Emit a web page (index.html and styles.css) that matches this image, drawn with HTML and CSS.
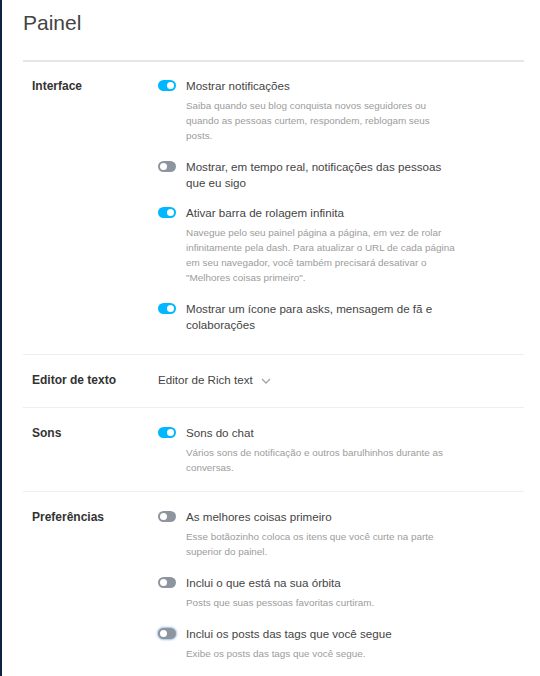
FILE: index.html
```html
<!DOCTYPE html>
<html lang="pt">
<head>
<meta charset="utf-8">
<link rel="stylesheet" href="styles.css">
</head>
<body>
<div class="page">
  <h1 class="title">Painel</h1>
  <div class="sections">
    <section class="section first">
      <div class="label">Interface</div>
      <div class="options">
        <div class="option">
          <span class="toggle on"></span>
          <div class="text">
            <div class="opt-title">Mostrar notificações</div>
            <div class="opt-desc">Saiba quando seu blog conquista novos seguidores ou quando as pessoas curtem, respondem, reblogam seus posts.</div>
          </div>
        </div>
        <div class="option">
          <span class="toggle"></span>
          <div class="text">
            <div class="opt-title">Mostrar, em tempo real, notificações das pessoas que eu sigo</div>
          </div>
        </div>
        <div class="option">
          <span class="toggle on"></span>
          <div class="text">
            <div class="opt-title">Ativar barra de rolagem infinita</div>
            <div class="opt-desc">Navegue pelo seu painel página a página, em vez de rolar infinitamente pela dash. Para atualizar o URL de cada página em seu navegador, você também precisará desativar o "Melhores coisas primeiro".</div>
          </div>
        </div>
        <div class="option">
          <span class="toggle on"></span>
          <div class="text">
            <div class="opt-title">Mostrar um ícone para asks, mensagem de fã e colaborações</div>
          </div>
        </div>
      </div>
    </section>
    <section class="section editor">
      <div class="label">Editor de texto</div>
      <div class="options">
        <div class="select">Editor de Rich text
          <svg class="chev" width="10" height="6" viewBox="0 0 10 6"><path d="M1 1l4 4 4-4" fill="none" stroke="#a3a3a3" stroke-width="1.3"/></svg>
        </div>
      </div>
    </section>
    <section class="section sounds">
      <div class="label">Sons</div>
      <div class="options">
        <div class="option">
          <span class="toggle on"></span>
          <div class="text">
            <div class="opt-title">Sons do chat</div>
            <div class="opt-desc">Vários sons de notificação e outros barulhinhos durante as conversas.</div>
          </div>
        </div>
      </div>
    </section>
    <section class="section last">
      <div class="label">Preferências</div>
      <div class="options">
        <div class="option">
          <span class="toggle"></span>
          <div class="text">
            <div class="opt-title">As melhores coisas primeiro</div>
            <div class="opt-desc">Esse botãozinho coloca os itens que você curte na parte superior do painel.</div>
          </div>
        </div>
        <div class="option">
          <span class="toggle"></span>
          <div class="text">
            <div class="opt-title">Inclui o que está na sua órbita</div>
            <div class="opt-desc">Posts que suas pessoas favoritas curtiram.</div>
          </div>
        </div>
        <div class="option">
          <span class="toggle focus"></span>
          <div class="text">
            <div class="opt-title">Inclui os posts das tags que você segue</div>
            <div class="opt-desc">Exibe os posts das tags que você segue.</div>
          </div>
        </div>
      </div>
    </section>
  </div>
</div>
</body>
</html>
```

FILE: styles.css
```css
html, body {
  margin: 0;
  padding: 0;
  background: #fff;
}
body {
  font-family: "Liberation Sans", Arial, sans-serif;
  color: #444;
  border-left: 2px solid #0d2440;
  min-height: 676px;
  box-sizing: border-box;
}
.page {
  padding: 0 16px 0 21px;
}
.title {
  margin: 0;
  padding-top: 10px;
  padding-bottom: 24px;
  font-size: 21px;
  line-height: 26px;
  font-weight: normal;
  color: #444;
  border-bottom: 2px solid #e6e6e6;
}
.section {
  display: flex;
  padding: 17px 0 16px;
  border-bottom: 1px solid #eeeeee;
}
.section.first {
  padding-top: 16px;
  padding-bottom: 21px;
}
.section.editor {
  padding-bottom: 19px;
}
.section.sounds {
  padding-bottom: 14px;
}
.section.last {
  border-bottom: none;
}
.label {
  width: 126px;
  padding-left: 9px;
  flex-shrink: 0;
  font-size: 12px;
  line-height: 16px;
  font-weight: bold;
  color: #333;
}
.options {
  display: flex;
  flex-direction: column;
  gap: 14px;
}
.option {
  display: flex;
  align-items: flex-start;
  gap: 10px;
}
.toggle {
  position: relative;
  width: 18px;
  height: 11px;
  margin-top: 2px;
  border-radius: 6px;
  background: #8e959e;
  flex-shrink: 0;
}
.toggle::after {
  content: "";
  position: absolute;
  top: 2px;
  left: 2px;
  width: 7px;
  height: 7px;
  border-radius: 50%;
  background: #fff;
}
.toggle.on {
  background: #00b8ff;
}
.toggle.on::after {
  left: 9px;
}
.toggle.focus {
  box-shadow: 0 0 2px 1px rgba(80, 140, 210, 0.55);
}
.text {
  width: 272px;
}
.opt-title {
  font-size: 11.6px;
  line-height: 16px;
  color: #444;
}
.opt-desc {
  margin-top: 4px;
  margin-bottom: 2px;
  font-size: 9.9px;
  line-height: 15px;
  color: #9c9c9c;
}
.select {
  display: flex;
  align-items: center;
  gap: 8px;
  font-size: 11.6px;
  line-height: 16px;
  color: #444;
}
.chev {
  margin-top: 1px;
}
```
